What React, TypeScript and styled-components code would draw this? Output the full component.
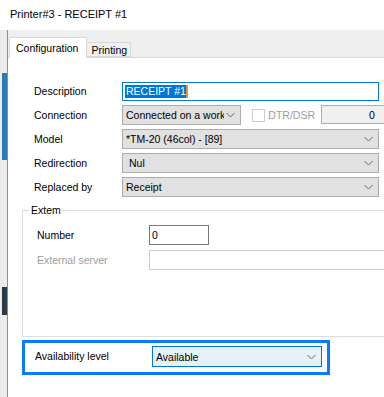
import React from 'react';
import styled, { createGlobalStyle } from 'styled-components';

const GlobalStyle = createGlobalStyle`
  html, body {
    margin: 0;
    padding: 0;
    background: #ffffff;
  }
  body {
    font-family: 'Liberation Sans', Arial, sans-serif;
    font-size: 10.5px;
    color: #000000;
  }
`;

const Window = styled.div`
  width: 384px;
  height: 397px;
  overflow: hidden;
  display: flex;
  flex-direction: column;
  background: #ffffff;
`;

const TitleBar = styled.div`
  flex: 0 0 30px;
  display: flex;
  align-items: center;
  padding: 0 0 2px 10px;
  box-sizing: border-box;
  font-size: 11px;
`;

const Body = styled.div`
  flex: 1;
  display: flex;
  min-height: 0;
`;

const LeftEdge = styled.div`
  flex: 0 0 8px;
  background: #ececec;
  border-right: 1px solid #8f8f8f;
  display: flex;
  flex-direction: column;
  padding-left: 2px;
  box-sizing: border-box;
`;

const EdgeBlock = styled.div<{ $top: number; $height: number; $color: string }>`
  margin-top: ${({ $top }) => $top}px;
  height: ${({ $height }) => $height}px;
  width: 5px;
  background: ${({ $color }) => $color};
`;

const TabControl = styled.div`
  flex: 1;
  display: flex;
  flex-direction: column;
  min-width: 0;
`;

const TabStrip = styled.div`
  flex: 0 0 28px;
  box-sizing: border-box;
  display: flex;
  align-items: flex-end;
  background: #efefef;
  border-bottom: 1px solid #d9d9d9;
  padding-left: 1px;
`;

const Tab = styled.div<{ $active?: boolean }>`
  box-sizing: border-box;
  height: ${({ $active }) => ($active ? '21px' : '15px')};
  margin-bottom: ${({ $active }) => ($active ? '-1px' : '0')};
  padding: ${({ $active }) => ($active ? '0 8px 0 6px' : '0 3px 0 4px')};
  display: flex;
  align-items: center;
  background: ${({ $active }) => ($active ? '#ffffff' : '#f0f0f0')};
  border: 1px solid #d9d9d9;
  border-bottom: ${({ $active }) => ($active ? 'none' : '1px solid #d9d9d9')};
  border-left: ${({ $active }) => ($active ? '1px solid #d9d9d9' : 'none')};
  white-space: nowrap;
`;

const Page = styled.div`
  flex: 1;
  background: #ffffff;
  padding: 23px 0 0 14px;
  overflow: hidden;
  display: flex;
  flex-direction: column;
  align-items: flex-start;
`;

const FormGrid = styled.div`
  display: grid;
  grid-template-columns: 88px 257px;
  grid-auto-rows: 20px;
  row-gap: 4px;
  padding-left: 12px;
  align-items: center;
`;

const Label = styled.span<{ $disabled?: boolean }>`
  color: ${({ $disabled }) => ($disabled ? '#9d9d9d' : '#000000')};
  white-space: nowrap;
`;

const TextInput = styled.div<{ $focused?: boolean; $disabled?: boolean; $width?: number }>`
  box-sizing: border-box;
  height: ${({ $focused }) => ($focused ? '19px' : '20px')};
  width: ${({ $width }) => ($width ? `${$width}px` : 'auto')};
  border: 1px solid
    ${({ $focused, $disabled }) => ($focused ? '#0078d7' : $disabled ? '#cccccc' : '#7a7a7a')};
  background: #ffffff;
  display: flex;
  align-items: center;
  padding-left: 2px;
  white-space: nowrap;
  overflow: hidden;
`;

const Selection = styled.span`
  background: #0078d7;
  color: #ffffff;
  line-height: 13px;
  padding: 0 0 0 1px;
`;

const Caret = styled.span`
  display: inline-block;
  width: 2px;
  height: 13px;
  background: #f28c28;
`;

const SelectBox = styled.div<{ $focused?: boolean; $width?: number; $indent?: number }>`
  box-sizing: border-box;
  height: ${({ $focused }) => ($focused ? '21px' : '20px')};
  width: ${({ $width }) => ($width ? `${$width}px` : '100%')};
  border: 1px solid ${({ $focused }) => ($focused ? '#0078d7' : '#adadad')};
  background: ${({ $focused }) => ($focused ? '#e5f1fb' : '#e1e1e1')};
  display: flex;
  align-items: center;
  padding: 0 5px 0 ${({ $indent }) => $indent ?? 3}px;
  white-space: nowrap;
`;

const SelectText = styled.span<{ $max?: number }>`
  flex: 1;
  min-width: 0;
  overflow: hidden;
  max-width: ${({ $max }) => ($max ? `${$max}px` : 'none')};
`;

const Chevron = () => (
  <svg width="9" height="6" viewBox="0 0 9 6" style={{ flexShrink: 0, marginLeft: 'auto' }}>
    <path d="M0.5 1 L4.5 5 L8.5 1" fill="none" stroke="#666666" strokeWidth="1" />
  </svg>
);

const ConnectionRow = styled.div`
  display: flex;
  align-items: center;
  width: 257px;
  overflow: visible;
`;

const CheckBox = styled.div`
  flex: 0 0 13px;
  height: 13px;
  box-sizing: border-box;
  border: 1px solid #cccccc;
  background: #ffffff;
  margin: 0 3px 0 11px;
`;

const NumberBox = styled.div`
  flex: 0 0 64px;
  box-sizing: border-box;
  height: 19px;
  margin: -1px 0 0 auto;
  transform: translateX(6px);
  border: 1px solid #adadad;
  background: #f0f0f0;
  display: flex;
  align-items: center;
  padding-left: 47px;
`;

const Group = styled.fieldset`
  margin: 7px 0 0 0;
  width: 380px;
  box-sizing: border-box;
  border: 1px solid #dcdcdc;
  padding: 8px 0 66px 14px;
  min-inline-size: 0;
`;

const Legend = styled.legend`
  padding: 0 1px;
  margin-left: -7px;
  line-height: 13px;
`;

const GroupGrid = styled.div`
  display: grid;
  grid-template-columns: 112px 1fr;
  grid-auto-rows: 20px;
  row-gap: 5px;
  align-items: center;
`;

const Highlight = styled.div`
  margin-top: 3px;
  width: 308px;
  height: 35px;
  box-sizing: border-box;
  border: 3px solid #0a7bff;
  display: flex;
  align-items: center;
  padding: 0 5px 2px 10px;
`;

const HighlightLabel = styled(Label)`
  flex: 0 0 117px;
  margin-top: -2px;
`;

const App: React.FC = () => {
  return (
    <>
      <GlobalStyle />
      <Window>
        <TitleBar>Printer#3 - RECEIPT #1</TitleBar>
        <Body>
          <LeftEdge>
            <EdgeBlock $top={43} $height={87} $color="#2d7bb3" />
            <EdgeBlock $top={127} $height={28} $color="#2c3b48" />
          </LeftEdge>
          <TabControl>
            <TabStrip>
              <Tab $active>Configuration</Tab>
              <Tab>Printing</Tab>
            </TabStrip>
            <Page>
              <FormGrid>
                <Label>Description</Label>
                <TextInput $focused>
                  <Selection>RECEIPT #1</Selection>
                  <Caret />
                </TextInput>

                <Label>Connection</Label>
                <ConnectionRow>
                  <SelectBox $width={122}>
                    <SelectText $max={98}>Connected on a work</SelectText>
                    <Chevron />
                  </SelectBox>
                  <CheckBox />
                  <Label $disabled>DTR/DSR</Label>
                  <NumberBox>0</NumberBox>
                </ConnectionRow>

                <Label>Model</Label>
                <SelectBox>
                  <SelectText>*TM-20 (46col) - [89]</SelectText>
                  <Chevron />
                </SelectBox>

                <Label>Redirection</Label>
                <SelectBox $indent={6}>
                  <SelectText>Nul</SelectText>
                  <Chevron />
                </SelectBox>

                <Label>Replaced by</Label>
                <SelectBox>
                  <SelectText>Receipt</SelectText>
                  <Chevron />
                </SelectBox>
              </FormGrid>

              <Group>
                <Legend>Extem</Legend>
                <GroupGrid>
                  <Label>Number</Label>
                  <TextInput $width={60}>0</TextInput>
                  <Label $disabled>External server</Label>
                  <TextInput $disabled />
                </GroupGrid>
              </Group>

              <Highlight>
                <HighlightLabel>Availability level</HighlightLabel>
                <SelectBox $focused $width={170}>
                  <SelectText>Available</SelectText>
                  <Chevron />
                </SelectBox>
              </Highlight>
            </Page>
          </TabControl>
        </Body>
      </Window>
    </>
  );
};

export default App;
